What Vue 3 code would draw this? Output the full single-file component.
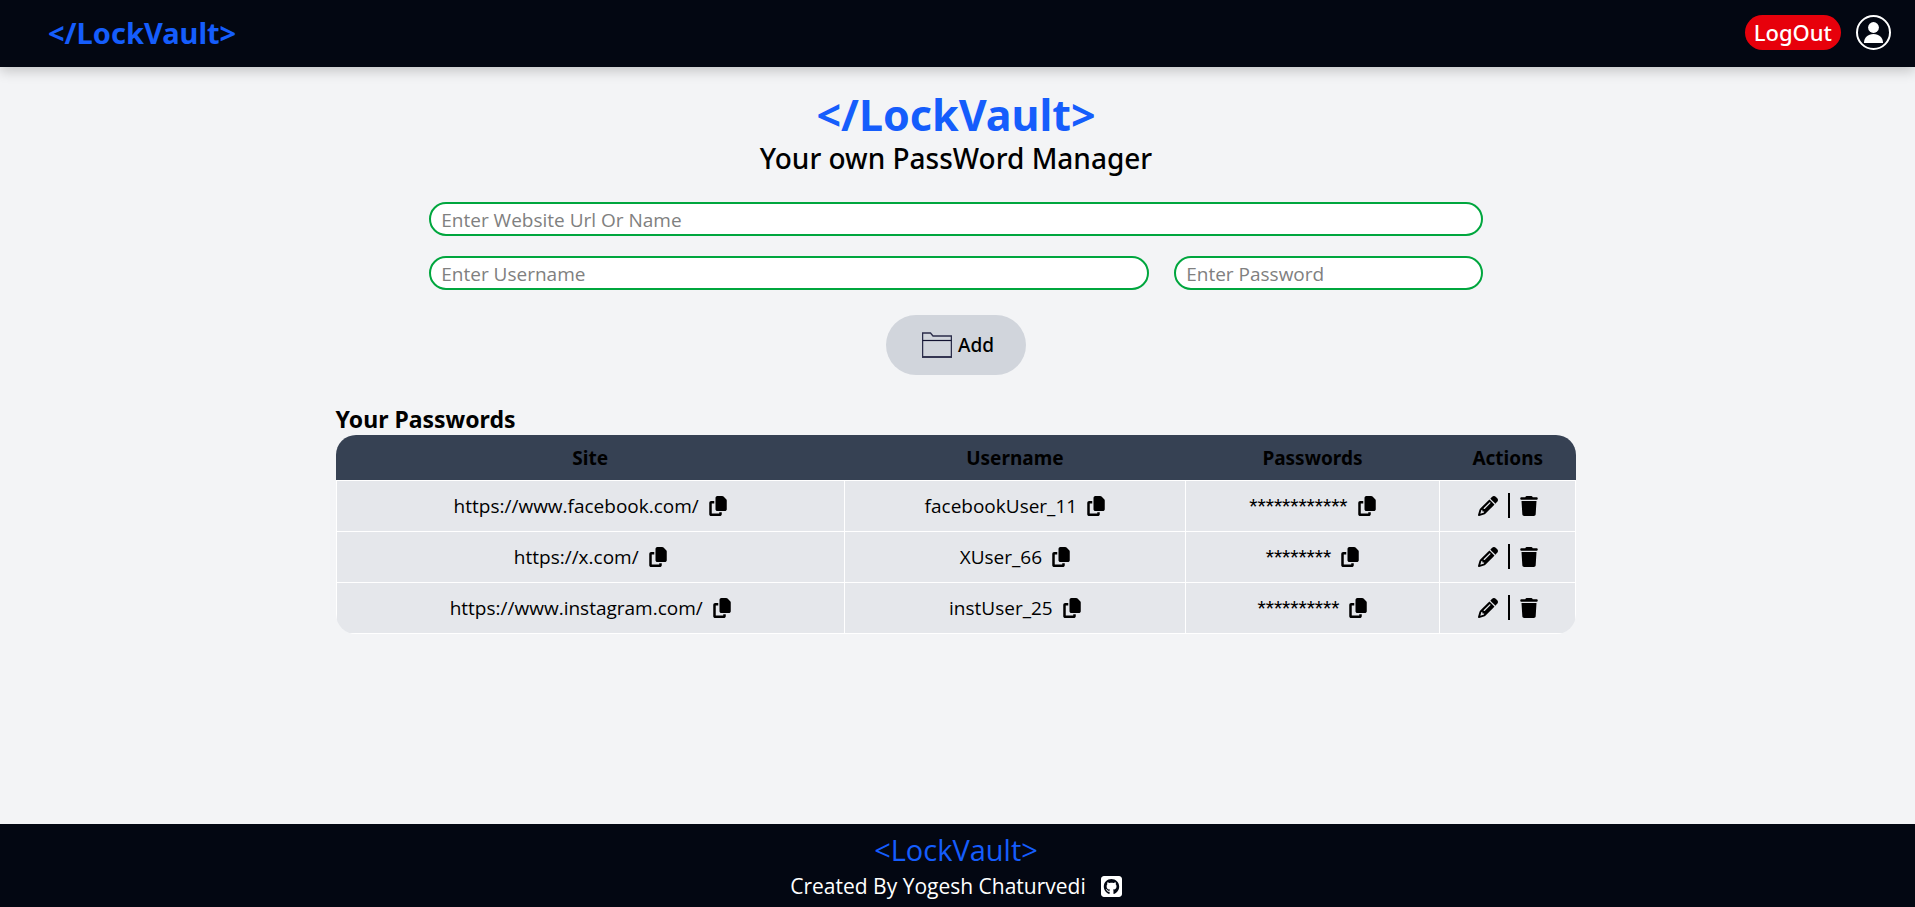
<script setup>
import { ref } from 'vue'

const site = ref('')
const username = ref('')
const password = ref('')

const entries = [
  { site: 'https://www.facebook.com/', username: 'facebookUser_11', length: 12 },
  { site: 'https://x.com/', username: 'XUser_66', length: 8 },
  { site: 'https://www.instagram.com/', username: 'instUser_25', length: 10 },
]

const copyPath =
  'M208 0L332.1 0c12.7 0 24.9 5.1 33.9 14.1l67.9 67.9c9 9 14.1 21.2 14.1 33.9L448 336c0 26.5-21.5 48-48 48l-192 0c-26.5 0-48-21.5-48-48l0-288c0-26.5 21.5-48 48-48zM48 128l80 0 0 64-64 0 0 256 192 0 0-32 64 0 0 48c0 26.5-21.5 48-48 48L48 512c-26.5 0-48-21.5-48-48L0 176c0-26.5 21.5-48 48-48z'
const pencilPath =
  'M410.3 231l11.3-11.3-33.9-33.9-62.1-62.1L291.7 89.8l-11.3 11.3-22.6 22.6L58.6 322.9c-10.4 10.4-18 23.3-22.2 37.4L1 480.7c-2.5 8.4-.2 17.5 6.1 23.7s15.3 8.5 23.7 6.1l120.3-35.4c14.1-4.2 27-11.8 37.4-22.2L387.7 253.7 410.3 231zM160 399.4l-9.1 22.7c-4 3.1-8.5 5.4-13.3 6.9L59.4 452l23-78.1c1.4-4.9 3.8-9.4 6.9-13.3l22.7-9.1 0 32c0 8.8 7.2 16 16 16l32 0zM362.7 18.7L348.3 33.2 325.7 55.8 314.3 67.1l33.9 33.9 62.1 62.1 33.9 33.9 11.3-11.3 22.6-22.6 14.5-14.5c25-25 25-65.5 0-90.5L453.3 18.7c-25-25-65.5-25-90.5 0zm-47.4 168l-144 144c-6.2 6.2-16.4 6.2-22.6 0s-6.2-16.4 0-22.6l144-144c6.2-6.2 16.4-6.2 22.6 0s6.2 16.4 0 22.6z'
const trashPath =
  'M135.2 17.7L128 32 32 32C14.3 32 0 46.3 0 64S14.3 96 32 96l384 0c17.7 0 32-14.3 32-32s-14.3-32-32-32l-96 0-7.2-14.3C307.4 6.8 296.3 0 284.2 0L163.8 0c-12.1 0-23.2 6.8-28.6 17.7zM416 128L32 128 53.2 467c1.6 25.3 22.6 45 47.9 45l245.8 0c25.3 0 46.3-19.7 47.9-45L416 128z'
</script>

<template>
  <div class="page">
    <nav class="nav">
      <a class="brand" href="#">&lt;/LockVault&gt;</a>
      <div class="account">
        <button class="logout" type="button">LogOut</button>
        <button class="icon-button" type="button" aria-label="Profile">
          <svg class="avatar" viewBox="0 0 35 35">
            <circle cx="17.5" cy="17.5" r="16.5" fill="none" stroke="#fff" stroke-width="2" />
            <circle cx="17.5" cy="12.5" r="5.4" fill="#fff" />
            <path d="M8 28c0-5.5 3.8-9 9.5-9s9.5 3.5 9.5 9z" fill="#fff" />
          </svg>
        </button>
      </div>
    </nav>

    <main class="main">
      <h1 class="title">&lt;/LockVault&gt;</h1>
      <p class="subtitle">Your own PassWord Manager</p>

      <form class="form" @submit.prevent>
        <input v-model="site" class="field" type="text" aria-label="Website" placeholder="Enter Website Url Or Name" />
        <div class="field-row">
          <input v-model="username" class="field" type="text" aria-label="Username" placeholder="Enter Username" />
          <input v-model="password" class="field" type="password" aria-label="Password" placeholder="Enter Password" />
        </div>
        <button class="add" type="submit">
          <svg class="folder" viewBox="0 0 30 26" fill="none" stroke="#2b2d4a">
            <path d="M0.6 25V1H8.5L11 4H29.4V25Z" stroke-width="1.3" />
            <path d="M0 25H30" stroke-width="1.5" />
            <path d="M0.6 8.5H29.4" stroke="#121331" stroke-width="1.2" />
          </svg>
          <span>Add</span>
        </button>
      </form>

      <section class="passwords">
        <h2 class="heading">Your Passwords</h2>
        <table class="table">
          <colgroup>
            <col class="col-site" />
            <col class="col-user" />
            <col class="col-pass" />
            <col class="col-act" />
          </colgroup>
          <thead>
            <tr>
              <th>Site</th>
              <th>Username</th>
              <th>Passwords</th>
              <th>Actions</th>
            </tr>
          </thead>
          <tbody>
            <tr v-for="entry in entries" :key="entry.site">
              <td>
                <div class="cell">
                  <a class="link" :href="entry.site">{{ entry.site }}</a>
                  <button class="icon-button" type="button" aria-label="Copy site">
                    <svg class="icon" viewBox="0 0 448 512"><path :d="copyPath" /></svg>
                  </button>
                </div>
              </td>
              <td>
                <div class="cell">
                  <span>{{ entry.username }}</span>
                  <button class="icon-button" type="button" aria-label="Copy username">
                    <svg class="icon" viewBox="0 0 448 512"><path :d="copyPath" /></svg>
                  </button>
                </div>
              </td>
              <td>
                <div class="cell">
                  <span class="mask">{{ '*'.repeat(entry.length) }}</span>
                  <button class="icon-button" type="button" aria-label="Copy password">
                    <svg class="icon" viewBox="0 0 448 512"><path :d="copyPath" /></svg>
                  </button>
                </div>
              </td>
              <td>
                <div class="cell">
                  <button class="icon-button" type="button" aria-label="Edit">
                    <svg class="icon icon-wide" viewBox="0 0 512 512"><path :d="pencilPath" /></svg>
                  </button>
                  <span class="divider"></span>
                  <button class="icon-button" type="button" aria-label="Delete">
                    <svg class="icon" viewBox="0 0 448 512"><path :d="trashPath" /></svg>
                  </button>
                </div>
              </td>
            </tr>
          </tbody>
        </table>
      </section>
    </main>

    <footer class="footer">
      <p class="footer-brand">&lt;LockVault&gt;</p>
      <p class="credit">
        <span>Created By Yogesh Chaturvedi</span>
        <a class="github" href="#" aria-label="GitHub">
          <svg viewBox="0 32 448 448" fill="#fff" fill-rule="evenodd">
            <path d="M448 96c0-35.3-28.7-64-64-64H64C28.7 32 0 60.7 0 96v320c0 35.3 28.7 64 64 64h320c35.3 0 64-28.7 64-64V96zM265.8 407.7c0-1.8 0-6 .1-11.6c.1-11.4 .1-28.8 .1-43.7c0-15.6-5.2-25.5-11.3-30.7c37-4.1 76-9.2 76-73.1c0-18.2-6.5-27.3-17.1-39c1.7-4.3 7.4-22-1.7-45c-13.9-4.3-45.7 17.9-45.7 17.9c-13.2-3.7-27.5-5.6-41.6-5.6s-28.4 1.9-41.6 5.6c0 0-31.8-22.2-45.7-17.9c-9.1 22.9-3.5 40.6-1.7 45c-10.6 11.7-15.6 20.8-15.6 39c0 63.6 37.3 69 74.3 73.1c-4.8 4.3-9.1 11.7-10.6 22.3c-9.5 4.3-33.8 11.7-48.3-13.9c-9.1-15.8-25.5-17.1-25.5-17.1c-16.2-.2-1.1 10.2-1.1 10.2c10.8 5 18.4 24.2 18.4 24.2c9.7 29.7 56.1 19.7 56.1 19.7c0 9 .1 21.7 .1 30.6c0 4.8 .1 8.6 .1 10c0 4.3-3 9.5-11.5 8C106 393.6 59.8 330.8 59.8 257.4c0-91.8 70.2-161.5 162-161.5s166.2 69.7 166.2 161.5c.1 73.4-44.7 136.3-110.7 158.3c-8.4 1.5-11.5-3.7-11.5-8z" />
          </svg>
        </a>
      </p>
    </footer>
  </div>
</template>

<style>
body {
  margin: 0;
  background: #f3f4f6;
}
</style>

<style scoped>
.page {
  display: flex;
  flex-direction: column;
  min-height: 100vh;
  font-family: 'Segoe UI', 'Open Sans', 'Noto Sans', sans-serif;
  font-size: 19px;
  line-height: 30px;
  color: #000;
}

.page * {
  box-sizing: border-box;
}

button,
input {
  font: inherit;
  color: inherit;
}

button {
  border: 0;
  cursor: pointer;
}

svg {
  display: block;
}

.brand,
.logout,
.title,
.subtitle,
.add,
.heading,
th {
  font-family: 'Segoe UI', 'Noto Sans', 'Open Sans', sans-serif;
}

.nav {
  display: flex;
  align-items: center;
  justify-content: space-between;
  padding: 15px 24px 17px 48px;
  background: #030712;
  box-shadow: 0 4px 12px rgba(0, 0, 0, 0.2);
}

.brand {
  font-size: 29px;
  font-weight: 700;
  line-height: 35px;
  color: #155dfc;
  text-decoration: none;
}

.account {
  display: flex;
  align-items: center;
  gap: 15px;
}

.logout {
  padding: 0 9px;
  border-radius: 18px;
  background: #e7000b;
  font-size: 22px;
  font-weight: 500;
  line-height: 35px;
  color: #fff;
}

.icon-button {
  padding: 0;
  background: none;
}

.avatar {
  width: 35px;
  height: 35px;
}

.main {
  flex: 1;
  display: flex;
  flex-direction: column;
  align-items: center;
  padding: 23px 3px 24px 0;
}

.title {
  margin: 0;
  font-size: 43px;
  font-weight: 700;
  line-height: 50px;
  color: #155dfc;
}

.subtitle {
  margin: 0;
  font-size: 28px;
  font-weight: 500;
  line-height: 37px;
}

.form {
  display: flex;
  flex-direction: column;
  align-items: center;
  gap: 20px;
  width: 55.1%;
  margin-top: 25px;
}

.field {
  width: 100%;
  height: 34px;
  padding: 1px 10px 0;
  border: 2px solid #00a63e;
  border-radius: 17px;
  background: #fff;
  outline: none;
}

.field::placeholder {
  color: #808080;
  opacity: 1;
}

.field-row {
  display: grid;
  grid-template-columns: 7fr 3fr;
  gap: 25px;
  width: 100%;
}

.add {
  display: flex;
  align-items: center;
  gap: 6px;
  height: 60px;
  margin-top: 5px;
  padding: 0 32px 0 36px;
  border-radius: 30px;
  background: #d1d5dc;
  font-weight: 500;
}

.folder {
  width: 30px;
  height: 26px;
}

.passwords {
  width: 64.9%;
  margin-top: 28px;
}

.heading {
  margin: 0;
  font-size: 23px;
  font-weight: 700;
  line-height: 32px;
}

.table {
  width: 100%;
  table-layout: fixed;
  border-collapse: collapse;
  border-radius: 20px;
  overflow: hidden;
}

.col-site {
  width: 41%;
}

.col-user {
  width: 27.5%;
}

.col-pass {
  width: 20.5%;
}

.col-act {
  width: 11%;
}

thead {
  background: #364153;
}

th {
  height: 45px;
  padding: 2px 0 0;
  font-weight: 700;
}

td {
  height: 51px;
  padding: 0;
  border: 1px solid #fff;
  background: #e5e7eb;
}

.cell {
  display: flex;
  align-items: center;
  justify-content: center;
  gap: 10px;
}

.link {
  color: inherit;
  text-decoration: none;
}

.mask {
  font-family: Roboto, sans-serif;
}

.icon {
  width: 18px;
  height: 20px;
}

.icon-wide {
  width: 20px;
}

.divider {
  width: 2px;
  height: 25px;
  background: #000;
}

.footer {
  display: flex;
  flex-direction: column;
  align-items: center;
  padding: 6px 3px 5px 0;
  background: #030712;
}

.footer-brand {
  margin: 0;
  font-size: 29px;
  line-height: 40px;
  color: #155dfc;
}

.credit {
  display: flex;
  align-items: center;
  gap: 15px;
  margin: 0;
  font-size: 21px;
  line-height: 32px;
  color: #fff;
}

.github svg {
  width: 21px;
  height: 21px;
}
</style>
